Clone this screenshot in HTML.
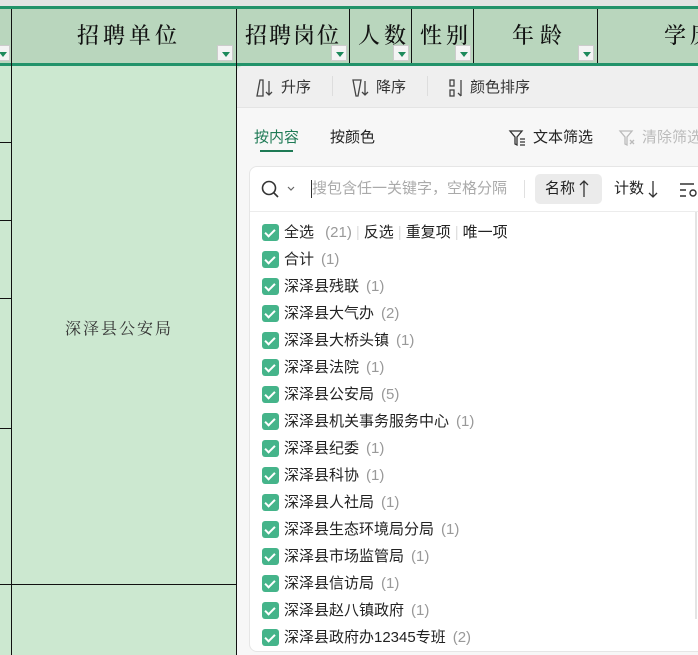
<!DOCTYPE html>
<html><head><meta charset="utf-8"><style>
*{margin:0;padding:0;box-sizing:border-box}
body{width:698px;height:655px;overflow:hidden;position:relative;background:#cce8d0;font-family:"Liberation Sans","Noto Sans CJK SC",sans-serif}
.a{position:absolute}
.hd{position:absolute;font-family:"Liberation Serif","Noto Serif CJK SC",serif;font-size:22px;color:#111;top:21px;letter-spacing:4px;white-space:nowrap;line-height:30px;font-weight:500}
.vl{position:absolute;width:1px;background:#111}
.hl{position:absolute;height:1px;background:#111}
.dd{position:absolute;top:45px;width:16px;height:16px;background:#f4f4f4;border:1px solid #ccc}
.dd:after{content:"";position:absolute;left:4px;top:6px;border-left:4px solid transparent;border-right:4px solid transparent;border-top:5px solid #1e8a5c}
.it{position:absolute;left:262px;font-size:15px;color:#222;height:18px;line-height:18px;white-space:nowrap}
.cb{display:inline-block;width:17px;height:17px;background:#45b48a;border-radius:3px;vertical-align:top;margin-right:5px;position:relative}
.cb:after{content:"";position:absolute;left:5px;top:3px;width:4px;height:8px;border:solid #fff;border-width:0 2px 2px 0;transform:rotate(45deg)}
.n{color:#999;margin-left:7px}
.t{position:absolute;font-size:15px;color:#333;white-space:nowrap;line-height:20px}
</style></head><body>
<div class="a" style="left:0;top:0;width:698px;height:6px;background:#e2e4e3"></div>
<div class="a" style="left:0;top:6px;width:698px;height:3px;background:#22936a"></div>
<div class="a" style="left:0;top:9px;width:698px;height:54px;background:#b9d6bd"></div>
<div class="a" style="left:0;top:63px;width:698px;height:3px;background:#22936a"></div>
<div class="vl" style="left:11px;top:9px;height:646px"></div>
<div class="vl" style="left:236px;top:9px;height:646px"></div>
<div class="vl" style="left:349px;top:9px;height:54px"></div>
<div class="vl" style="left:411px;top:9px;height:54px"></div>
<div class="vl" style="left:473px;top:9px;height:54px"></div>
<div class="vl" style="left:597px;top:9px;height:54px"></div>
<div class="hl" style="left:0;top:142px;width:11px"></div>
<div class="hl" style="left:0;top:220px;width:11px"></div>
<div class="hl" style="left:0;top:298px;width:11px"></div>
<div class="hl" style="left:0;top:428px;width:11px"></div>
<div class="hl" style="left:0;top:584px;width:237px"></div>
<div class="hd" style="left:77px">招聘单位</div>
<div class="hd" style="left:245px;letter-spacing:2px">招聘岗位</div>
<div class="hd" style="left:358px">人数</div>
<div class="hd" style="left:420px">性别</div>
<div class="hd" style="left:512px;letter-spacing:6px">年龄</div>
<div class="hd" style="left:664px">学历</div>
<div class="dd" style="left:-6px"></div>
<div class="dd" style="left:217px"></div>
<div class="dd" style="left:331px"></div>
<div class="dd" style="left:393px"></div>
<div class="dd" style="left:455px"></div>
<div class="dd" style="left:578px"></div>
<div class="a" style="left:65px;top:316px;font-family:'Liberation Serif','Noto Serif CJK SC',serif;font-size:16px;color:#333;letter-spacing:2px">深泽县公安局</div>
<div class="a" style="left:237px;top:66px;width:461px;height:589px;background:#f7f7f7;border-radius:6px 0 0 0"></div>
<div class="a" style="left:237px;top:66px;width:461px;height:42px;background:#efefef;border-radius:6px 0 0 0;border-bottom:1px solid #e4e4e4"></div>
<svg class="a" style="left:255px;top:78px" width="24" height="20" fill="none" stroke="#444" stroke-width="1.3"><path d="M2 18L5 2h3v16z"/><path d="M14 3v14M11 14l3 3 3-3"/></svg>
<div class="t" style="left:281px;top:78px">升序</div>
<div class="a" style="left:332px;top:76px;width:1px;height:20px;background:#ddd"></div>
<svg class="a" style="left:351px;top:78px" width="24" height="20" fill="none" stroke="#444" stroke-width="1.3"><path d="M2 2h8l-3 16H5z"/><path d="M14 3v14M11 14l3 3 3-3"/></svg>
<div class="t" style="left:376px;top:78px">降序</div>
<div class="a" style="left:427px;top:76px;width:1px;height:20px;background:#ddd"></div>
<svg class="a" style="left:448px;top:78px" width="20" height="20" fill="none" stroke="#444" stroke-width="1.3"><rect x="2" y="2" width="4" height="6"/><rect x="2" y="12" width="4" height="6"/><path d="M13 2v16M10 15l3 3"/></svg>
<div class="t" style="left:470px;top:78px">颜色排序</div>
<div class="t" style="left:254px;top:128px;color:#1e7a55">按内容</div>
<div class="a" style="left:260px;top:150px;width:33px;height:2px;background:#1e7a55"></div>
<div class="t" style="left:330px;top:128px;color:#222">按颜色</div>
<svg class="a" style="left:508px;top:128px" width="20" height="20" fill="none" stroke="#333" stroke-width="1.3"><path d="M2 3h12l-5 6v8l-2-1V9z"/><path d="M12 11h5M12 14h5M12 17h5"/></svg>
<div class="t" style="left:533px;top:128px;color:#222">文本筛选</div>
<svg class="a" style="left:618px;top:128px" width="20" height="20" fill="none" stroke="#bbb" stroke-width="1.3"><path d="M2 3h12l-5 6v8l-2-1V9z"/><path d="M12 12l4 4M16 12l-4 4"/></svg>
<div class="t" style="left:642px;top:128px;color:#bbb">清除筛选</div>
<div class="a" style="left:249px;top:166px;width:460px;height:486px;background:#fff;border:1px solid #e6e6e6;border-radius:8px"></div>
<div class="a" style="left:250px;top:211px;width:448px;height:1px;background:#ececec"></div>
<svg class="a" style="left:261px;top:179px" width="40" height="20"><circle cx="8" cy="9" r="6.5" fill="none" stroke="#333" stroke-width="1.6"/><path d="M13 14l4 4" stroke="#333" stroke-width="1.6"/><path d="M27 8l3 3 3-3" fill="none" stroke="#666" stroke-width="1.2"/></svg>
<div class="a" style="left:311px;top:180px;width:1px;height:18px;background:#333"></div>
<div class="t" style="left:312px;top:179px;color:#aaa">搜包含任一关键字，空格分隔</div>
<div class="a" style="left:524px;top:180px;width:1px;height:18px;background:#e0e0e0"></div>
<div class="a" style="left:535px;top:174px;width:67px;height:30px;background:#ebebeb;border-radius:5px"></div>
<div class="t" style="left:545px;top:179px;color:#222">名称</div>
<svg class="a" style="left:577px;top:179px" width="14" height="20" fill="none" stroke="#333" stroke-width="1.3"><path d="M7 2v16M3 6l4-4 4 4"/></svg>
<div class="t" style="left:614px;top:179px;color:#222">计数</div>
<svg class="a" style="left:646px;top:179px" width="14" height="20" fill="none" stroke="#333" stroke-width="1.3"><path d="M7 2v16M3 14l4 4 4-4"/></svg>
<svg class="a" style="left:679px;top:181px" width="19" height="18" fill="none" stroke="#333" stroke-width="1.4"><path d="M1 3h14M1 9h6M1 15h6"/><circle cx="14" cy="12" r="3"/></svg>
<div class="it" style="top:224px"><span class="cb"></span>全选 <span class="n">(21)</span><span style="color:#ddd;margin:0 4px">|</span>反选<span style="color:#ddd;margin:0 4px">|</span>重复项<span style="color:#ddd;margin:0 4px">|</span>唯一项</div>
<div class="it" style="top:251px"><span class="cb"></span>合计<span class="n">(1)</span></div>
<div class="it" style="top:278px"><span class="cb"></span>深泽县残联<span class="n">(1)</span></div>
<div class="it" style="top:305px"><span class="cb"></span>深泽县大气办<span class="n">(2)</span></div>
<div class="it" style="top:332px"><span class="cb"></span>深泽县大桥头镇<span class="n">(1)</span></div>
<div class="it" style="top:359px"><span class="cb"></span>深泽县法院<span class="n">(1)</span></div>
<div class="it" style="top:386px"><span class="cb"></span>深泽县公安局<span class="n">(5)</span></div>
<div class="it" style="top:413px"><span class="cb"></span>深泽县机关事务服务中心<span class="n">(1)</span></div>
<div class="it" style="top:440px"><span class="cb"></span>深泽县纪委<span class="n">(1)</span></div>
<div class="it" style="top:467px"><span class="cb"></span>深泽县科协<span class="n">(1)</span></div>
<div class="it" style="top:494px"><span class="cb"></span>深泽县人社局<span class="n">(1)</span></div>
<div class="it" style="top:521px"><span class="cb"></span>深泽县生态环境局分局<span class="n">(1)</span></div>
<div class="it" style="top:548px"><span class="cb"></span>深泽县市场监管局<span class="n">(1)</span></div>
<div class="it" style="top:575px"><span class="cb"></span>深泽县信访局<span class="n">(1)</span></div>
<div class="it" style="top:602px"><span class="cb"></span>深泽县赵八镇政府<span class="n">(1)</span></div>
<div class="it" style="top:629px"><span class="cb"></span>深泽县政府办12345专班<span class="n">(2)</span></div>
<div class="a" style="left:695px;top:212px;width:2px;height:407px;background:#e4e4e4"></div>
</body></html>
